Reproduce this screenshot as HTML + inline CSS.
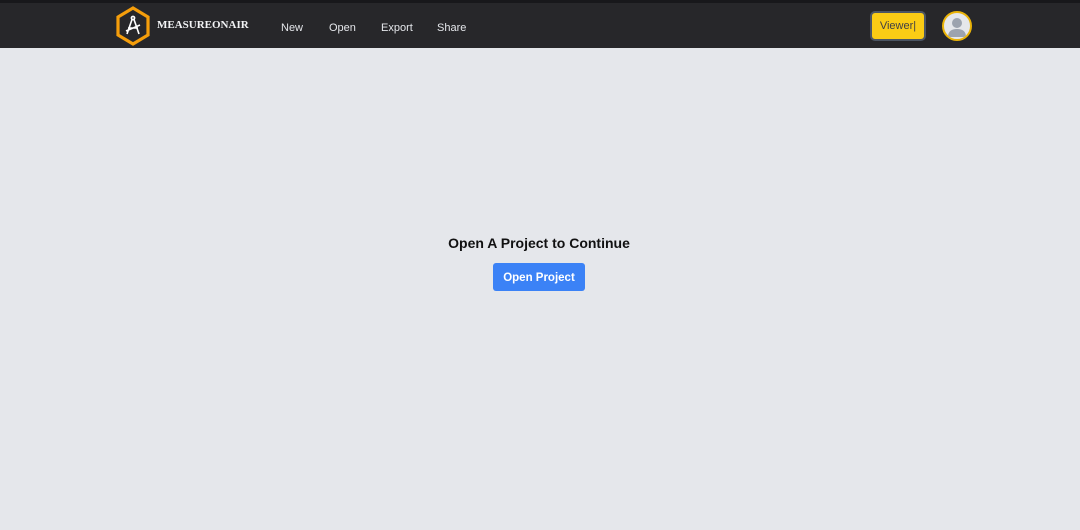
<!DOCTYPE html>
<html><head><style>
body{margin:0;width:1080px;height:530px;background:#e5e7eb;font-family:"Liberation Sans",sans-serif;position:relative;overflow:hidden}
.nav{position:absolute;left:0;top:0;width:1080px;height:48px;background:#27272a;border-top:3px solid #18181b;box-sizing:border-box}
.t{position:absolute;color:#e5e7eb;font-size:11px;top:19px}
.brand{position:absolute;left:157px;top:16px;color:#f3f4f6;font:bold 11px "Liberation Serif",serif;letter-spacing:0}
.viewer{position:absolute;left:870px;top:8px;width:56px;height:30px;box-sizing:border-box;border:2px solid #4b5563;border-radius:5px;background:#facc15;font-size:11px;color:#3f3f46;text-align:center;line-height:26px}
.av{position:absolute;left:942px;top:8px;width:30px;height:30px;box-sizing:border-box;border:2px solid #eab308;border-radius:50%;background:#e5e7eb;overflow:hidden}
h1{position:absolute;left:0;width:1078px;top:235px;margin:0;text-align:center;font-size:14px;font-weight:bold;color:#111}
.btn{position:absolute;left:493px;top:263px;width:92px;height:28px;background:#3b82f6;border-radius:3px;color:#fff;font-size:11.5px;font-weight:bold;text-align:center;line-height:31px}
</style></head><body>
<div class="nav">
<svg style="position:absolute;left:114px;top:3px" width="38" height="40" viewBox="0 0 38 40">
<polygon points="19,2 34,11 34,29 19,38 4,29 4,11" fill="none" stroke="#f59e0b" stroke-width="3.2"/>
<g stroke="#fff" stroke-width="1.6" fill="none"><circle cx="19" cy="12" r="1.6"/><path d="M18 13.5 L13 28 M20 13.5 L25 28 M14 22 L24 22 M12 25 L26 19"/></g>
</svg>
<div class="brand">MEASUREONAIR</div>
<div class="t" style="left:281px">New</div>
<div class="t" style="left:329px">Open</div>
<div class="t" style="left:381px">Export</div>
<div class="t" style="left:437px">Share</div>
<div class="viewer">Viewer|</div>
<div class="av"><svg width="26" height="26" viewBox="0 0 26 26"><circle cx="13" cy="10" r="5" fill="#9ca3af"/><path d="M4 24 Q4 16 13 16 Q22 16 22 24Z" fill="#9ca3af"/></svg></div>
</div>
<h1>Open A Project to Continue</h1>
<div class="btn">Open Project</div>
</body></html>
